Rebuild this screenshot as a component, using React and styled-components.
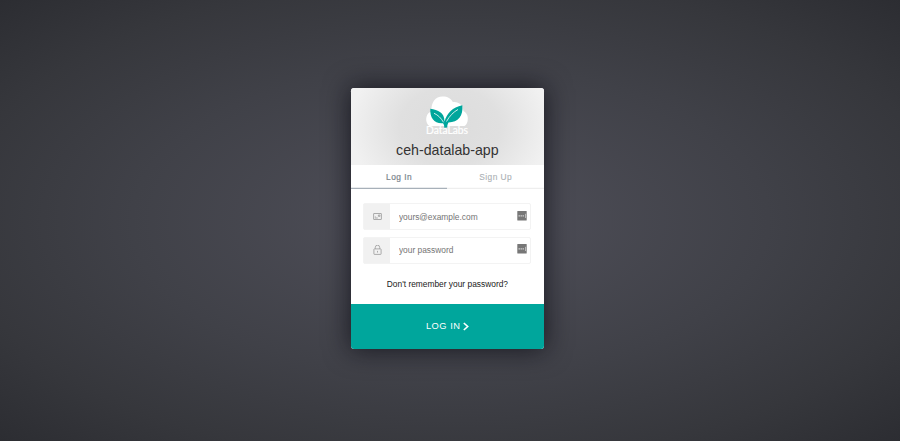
import React from "react";
import styled, { createGlobalStyle } from "styled-components";

const GlobalStyle = createGlobalStyle`
  * { box-sizing: border-box; }
  html, body { margin: 0; padding: 0; overflow: hidden; }
  body { font-family: "Liberation Sans", Arial, sans-serif; }
`;

const Page = styled.main`
  height: 441px;
  padding: 88.4px 0 0 350.7px;
  background: radial-gradient(ellipse farthest-corner at 50% 50%, #50505a 0%, #404148 50%, #36373c 78%, #2c2d32 100%);
`;

const Card = styled.form`
  width: 193.4px;
  height: 260.9px;
  display: flex;
  flex-direction: column;
  border-radius: 3.2px;
  background: #fff;
  box-shadow: 0 0 26px 1px rgba(8, 8, 16, 0.72);
`;

const Header = styled.header`
  height: 76.4px;
  flex: none;
  display: flex;
  flex-direction: column;
  align-items: center;
  padding-top: 7.2px;
  border-radius: 3.2px 3.2px 0 0;
  background: radial-gradient(ellipse 100px 78px at 51% 50%, #dcdcdc 0%, #e0e0e0 50%, #f1f1f1 100%);
`;

const Logo = styled.svg`
  width: 44px;
  height: 38.7px;
  display: block;
`;

const Title = styled.h1`
  margin: 8px 0 0;
  font-size: 14.2px;
  line-height: 16px;
  font-weight: 400;
  color: #333;
`;

const Tabs = styled.nav`
  display: flex;
  height: 24.6px;
  flex: none;
`;

const Tab = styled.button`
  flex: 1;
  padding: 0 0 0.6px;
  border: 0;
  box-shadow: inset 0 -1.3px 0 ${(p) => (p.$active ? "#a7b0b9" : "#eeeeee")};
  background: none;
  font: inherit;
  font-size: 8.4px;
  letter-spacing: 0.45px;
  -webkit-text-stroke: ${(p) => (p.$active ? "0.2px" : "0.1px")};
  color: ${(p) => (p.$active ? "#7b858d" : "#abb0b4")};
`;

const Fields = styled.div`
  flex: 1;
  display: flex;
  flex-direction: column;
  align-items: center;
  gap: 6.4px;
  padding-top: 14px;
`;

const Field = styled.label`
  width: 168px;
  height: 27px;
  flex: none;
  display: flex;
  border: 1px solid #f3f3f3;
  border-radius: 2px;
`;

const IconCell = styled.span`
  width: 25.5px;
  display: flex;
  align-items: center;
  justify-content: center;
  background: #f1f1f1;
`;

const FieldIcon = styled.svg`
  width: 9px;
  height: 10px;
  display: block;
`;

const Input = styled.input`
  flex: 1;
  min-width: 0;
  padding: 0 0 0 9px;
  border: 0;
  outline: 0;
  background: none;
  font: inherit;
  font-size: 8.4px;
  &::placeholder { color: #757575; }
`;

const Manager = styled.svg`
  width: 10px;
  height: 10px;
  margin: 6.3px 3.5px 0 0;
`;

const Forgot = styled.a`
  margin-top: 7.4px;
  font-size: 8.4px;
  line-height: 12px;
  color: #222;
`;

const Submit = styled.button`
  height: 45.3px;
  flex: none;
  display: flex;
  align-items: center;
  justify-content: center;
  gap: 2.4px;
  padding: 0 0 0.8px;
  border: 0;
  border-radius: 0 0 3.2px 3.2px;
  background: #00a69c;
  color: #fff;
  font: inherit;
  font-size: 9.3px;
  letter-spacing: 0.5px;
`;

const Arrow = styled.svg`
  width: 6px;
  height: 9px;
`;

function DataLabsLogo() {
  return (
    <Logo viewBox="0 0 44 38.7">
      <path fill="#fff" d="M4.500 30C1.500 28 .6 24 1.600 20.500 2.300 17.800 4 16.400 6.500 15.500 5.800 6.500 10.500.5 17.500.5c5.200 0 8.500 2 10.300 5.500 6-.8 10.200 3 10.700 9 4 2.200 5 6.500 4 10.500-.6 2.200-1.500 3.500-3 4.500Z" />
      <path fill="#00a69c" d="M5.300 12.800C13 14 19.500 16.500 19.500 25.500 22 17 27.500 11.500 37.300 9.300c1.200 10.500-4 17-13.800 17.200-.8 1.300-1.200 2.900-1.400 5l-2.800.3c0-2-.3-3.300-1.300-4.600C9.500 28 4.700 22 5.300 12.800Z" />
      <path fill="none" stroke="#fff" strokeWidth=".8" d="M9 17.300c4 1.700 7 4.700 9.500 9M33 13.500c-4.500 2.500-8.500 6.500-11.500 12" />
      <text x="22" y="38" textAnchor="middle" textLength="42" lengthAdjust="spacingAndGlyphs" fontFamily="Lato, sans-serif" fontSize="10.800" fill="#fff" stroke="#fff" strokeWidth=".25">DataLabs</text>
    </Logo>
  );
}

function CardIcon() {
  return (
    <FieldIcon viewBox="0 0 9 10" fill="none" stroke="#a3a3a3" strokeWidth=".9">
      <rect x=".6" y="1.500" width="7.800" height="6" rx=".3" />
      <path d="M5.400 3h1.500v1.400H5.400zM1.800 6h3M1.800 4.900h1" />
    </FieldIcon>
  );
}

function LockIcon() {
  return (
    <FieldIcon viewBox="0 0 9 10" fill="none" stroke="#999" strokeWidth=".8">
      <rect x=".9" y="3.900" width="7.200" height="5.500" rx=".5" />
      <path d="M2.300 3.900V2.400a2.200 2.200 0 0 1 4.400 0V3.900M4.500 5.900v1.700" />
    </FieldIcon>
  );
}

function ManagerIcon() {
  return (
    <Manager viewBox="0 0 10 10">
      <rect x=".3" y=".1" width="9.400" height="9.300" rx=".5" fill="#777" />
      <path d="M1.500 4.900h5.800" stroke="#ccc" strokeWidth="1.400" strokeDasharray="1.500 .5" />
      <path d="M8.500 2.800v4.200" stroke="#ccc" strokeWidth=".8" />
    </Manager>
  );
}

export default function App() {
  return (
    <>
      <GlobalStyle />
      <Page>
        <Card>
          <Header>
            <DataLabsLogo />
            <Title>ceh-datalab-app</Title>
          </Header>
          <Tabs>
            <Tab type="button" $active>Log In</Tab>
            <Tab type="button">Sign Up</Tab>
          </Tabs>
          <Fields>
            <Field>
              <IconCell><CardIcon /></IconCell>
              <Input type="email" placeholder="yours@example.com" />
              <ManagerIcon />
            </Field>
            <Field>
              <IconCell><LockIcon /></IconCell>
              <Input type="password" placeholder="your password" />
              <ManagerIcon />
            </Field>
            <Forgot>Don't remember your password?</Forgot>
          </Fields>
          <Submit type="button">
            LOG IN
            <Arrow viewBox="0 0 6 9" fill="none" stroke="#fff" strokeWidth="1.600">
              <path d="M.8 1l3.900 3.500L.8 8" />
            </Arrow>
          </Submit>
        </Card>
      </Page>
    </>
  );
}
